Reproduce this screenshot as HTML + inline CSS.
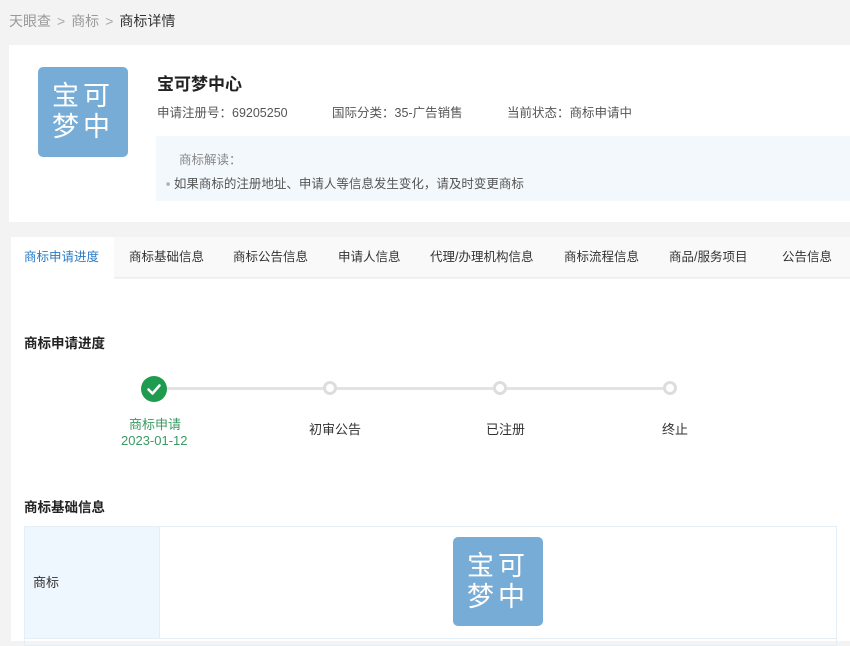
<!DOCTYPE html>
<html><head><meta charset="utf-8"><style>
*{margin:0;padding:0;box-sizing:border-box}
body{width:850px;height:641px;overflow:hidden;background:#f3f3f3;font-family:"Liberation Sans","Noto Sans CJK SC",sans-serif;position:relative;color:#333}
.a{position:absolute;white-space:nowrap}
.logo{position:absolute;background:#76acd6;border-radius:5px;color:#fff;font-size:27px;line-height:31px;text-align:center;padding-top:14px;letter-spacing:4px}
.tab{position:absolute;top:246px;font-size:12.5px;color:#333}
.lbl{font-size:13px;color:#333}
.dot{position:absolute;top:381px;width:14px;height:14px;border-radius:50%;border:3px solid #ddd;background:#fff}
.sep{color:#aaa;margin:0 6px}
</style></head><body>
<div class="a" style="left:9px;top:11px;font-size:14px;color:#999">天眼查<span class="sep">&gt;</span>商标<span class="sep">&gt;</span><span style="color:#333">商标详情</span></div>
<div class="a" style="left:9px;top:45px;width:841px;height:177px;background:#fff"></div>
<div class="logo" style="left:38px;top:67px;width:90px;height:90px">宝可<br>梦中</div>
<div class="a" style="left:157px;top:70px;font-size:17px;font-weight:bold;color:#222">宝可梦中心</div>
<div class="a" style="left:157px;top:102px;font-size:12.5px;color:#555">申请注册号：69205250</div>
<div class="a" style="left:332px;top:102px;font-size:12.5px;color:#555">国际分类：35-广告销售</div>
<div class="a" style="left:507px;top:102px;font-size:12.5px;color:#555">当前状态：商标申请中</div>
<div class="a" style="left:156px;top:136px;width:694px;height:65px;background:#f3f8fc"></div>
<div class="a" style="left:179px;top:149px;font-size:12.5px;color:#888">商标解读：</div>
<div class="a" style="left:166px;top:173px;font-size:12.5px;color:#555"><span style="color:#aaa">▪</span> 如果商标的注册地址、申请人等信息发生变化，请及时变更商标</div>
<div class="a" style="left:11px;top:237px;width:839px;height:41px;background:#f9f9f9;border-bottom:1px solid #eee"></div>
<div class="a" style="left:11px;top:237px;width:103px;height:42px;background:#fff"></div>
<div class="tab" style="left:24px;color:#2a7bc6">商标申请进度</div>
<div class="tab" style="left:129px">商标基础信息</div>
<div class="tab" style="left:233px">商标公告信息</div>
<div class="tab" style="left:338px">申请人信息</div>
<div class="tab" style="left:430px">代理/办理机构信息</div>
<div class="tab" style="left:564px">商标流程信息</div>
<div class="tab" style="left:669px">商品/服务项目</div>
<div class="tab" style="left:782px">公告信息</div>
<div class="a" style="left:11px;top:279px;width:839px;height:362px;background:#fff"></div>
<div class="a" style="left:24px;top:332px;font-size:13.5px;font-weight:bold;color:#222">商标申请进度</div>
<div class="a" style="left:160px;top:387px;width:510px;height:3px;background:#e3e3e3"></div>
<div class="a" style="left:141px;top:376px;width:26px;height:26px;border-radius:50%;background:#1e9b4f"><svg width="26" height="26"><path d="M7.5 13.5l4 4 7-8" fill="none" stroke="#fff" stroke-width="2.5" stroke-linecap="round" stroke-linejoin="round"/></svg></div>
<div class="dot" style="left:323px"></div>
<div class="dot" style="left:493px"></div>
<div class="dot" style="left:663px"></div>
<div class="a lbl" style="left:129px;top:414px;color:#3a9a62">商标申请</div>
<div class="a lbl" style="left:121px;top:433px;color:#3a9a62">2023-01-12</div>
<div class="a lbl" style="left:309px;top:419px">初审公告</div>
<div class="a lbl" style="left:486px;top:419px">已注册</div>
<div class="a lbl" style="left:662px;top:419px">终止</div>
<div class="a" style="left:24px;top:496px;font-size:13.5px;font-weight:bold;color:#222">商标基础信息</div>
<div class="a" style="left:24px;top:526px;width:813px;height:120px;border:1px solid #e4eef6"></div>
<div class="a" style="left:25px;top:527px;width:135px;height:112px;background:#eef6fe;border-right:1px solid #e4eef6"></div>
<div class="a" style="left:25px;top:638px;width:811px;height:1px;background:#e4eef6"></div>
<div class="a lbl" style="left:33px;top:572px">商标</div>
<div class="logo" style="left:453px;top:537px;width:90px;height:89px">宝可<br>梦中</div>
</body></html>
